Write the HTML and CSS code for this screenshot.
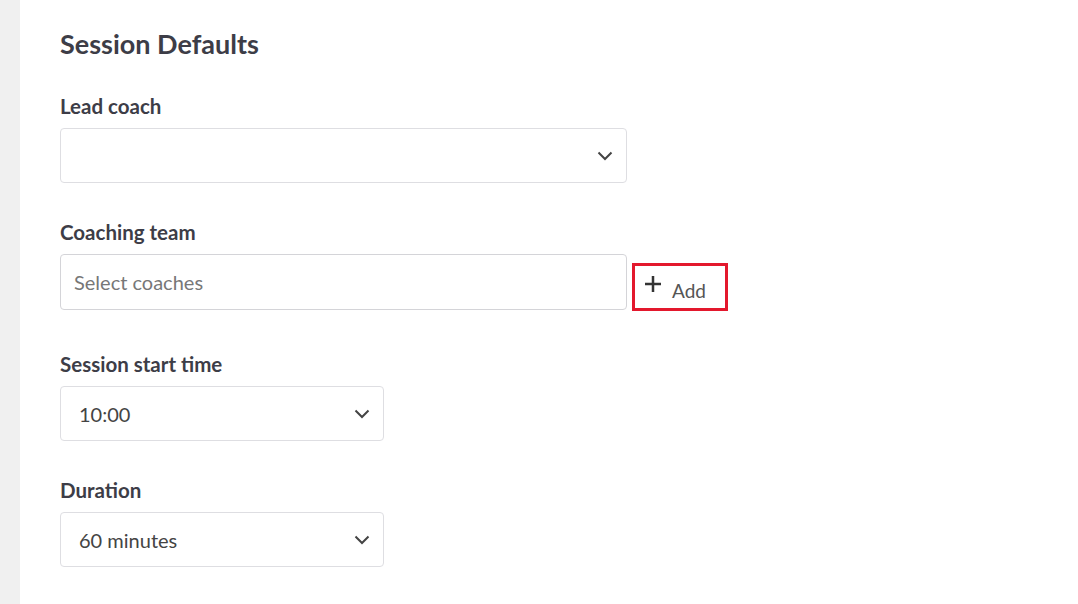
FILE: index.html
```html
<!DOCTYPE html>
<html>
<head>
<meta charset="utf-8">
<link rel="stylesheet" href="styles.css">
</head>
<body>
<div class="page">
  <aside class="strip"></aside>
  <main class="content">
    <h1 class="title">Session Defaults</h1>

    <div class="field">
      <label class="label">Lead coach</label>
      <div class="select wide">
        <span class="value"></span>
        <svg class="chev" width="16" height="10" viewBox="0 0 16 10"><path d="M1.5 1.5 L8 8 L14.5 1.5" fill="none" stroke="#444" stroke-width="2"/></svg>
      </div>
    </div>

    <div class="field field-team">
      <label class="label">Coaching team</label>
      <div class="row">
        <div class="input wide"><span class="placeholder">Select coaches</span></div>
        <button class="add">
          <svg class="plus" width="18" height="18" viewBox="0 0 18 18"><path d="M9 1 V17 M1 9 H17" fill="none" stroke="#333" stroke-width="2.5"/></svg>
          <span class="add-text">Add</span>
        </button>
      </div>
    </div>

    <div class="field">
      <label class="label">Session start time</label>
      <div class="select narrow">
        <span class="value">10:00</span>
        <svg class="chev" width="16" height="10" viewBox="0 0 16 10"><path d="M1.5 1.5 L8 8 L14.5 1.5" fill="none" stroke="#444" stroke-width="2"/></svg>
      </div>
    </div>

    <div class="field">
      <label class="label">Duration</label>
      <div class="select narrow">
        <span class="value">60 minutes</span>
        <svg class="chev" width="16" height="10" viewBox="0 0 16 10"><path d="M1.5 1.5 L8 8 L14.5 1.5" fill="none" stroke="#444" stroke-width="2"/></svg>
      </div>
    </div>
  </main>
</div>
</body>
</html>
```
FILE: styles.css
```css
* { box-sizing: border-box; }
html, body { margin: 0; padding: 0; background: #fff; }
body { font-family: Lato, "Open Sans", sans-serif; color: #3d3d47; }
.page { display: flex; min-height: 604px; }
.strip { width: 20px; background: #f0f0f0; flex: none; }
.content { padding: 28px 0 0 40px; flex: 1; }
.title { margin: 0 0 34px 0; font-size: 27px; line-height: 32px; font-weight: 700; color: #3d3d47; }
.field { margin-bottom: 37px; }
.field-team { margin-bottom: 41px; }
.label { display: block; font-size: 20.5px; line-height: 24px; font-weight: 700; color: #3d3d47; margin-bottom: 10px; }
.select, .input {
  height: 55px; border: 1px solid #dedee2; border-radius: 4px; background: #fff;
  display: flex; align-items: center; justify-content: space-between;
  padding: 0 13px 0 18px;
}
.wide { width: 567px; }
.narrow { width: 324px; }
.input { height: 56px; border-color: #d4d4d8; padding-left: 13px; }
.value { font-size: 20px; color: #444; }
.placeholder { font-size: 20px; color: #777; }
.chev { display: block; }
.row { display: flex; align-items: flex-start; gap: 5px; }
.add {
  margin-top: 9px; width: 96px; height: 48px; border: 3px solid #e3182d; background: #fff;
  display: flex; align-items: center; padding: 0 0 0 9px; gap: 10px; cursor: pointer;
  font-family: inherit;
}
.plus { display: block; margin-top: -7px; }
.add-text { font-size: 19px; color: #555; margin-top: 6px; }
```
